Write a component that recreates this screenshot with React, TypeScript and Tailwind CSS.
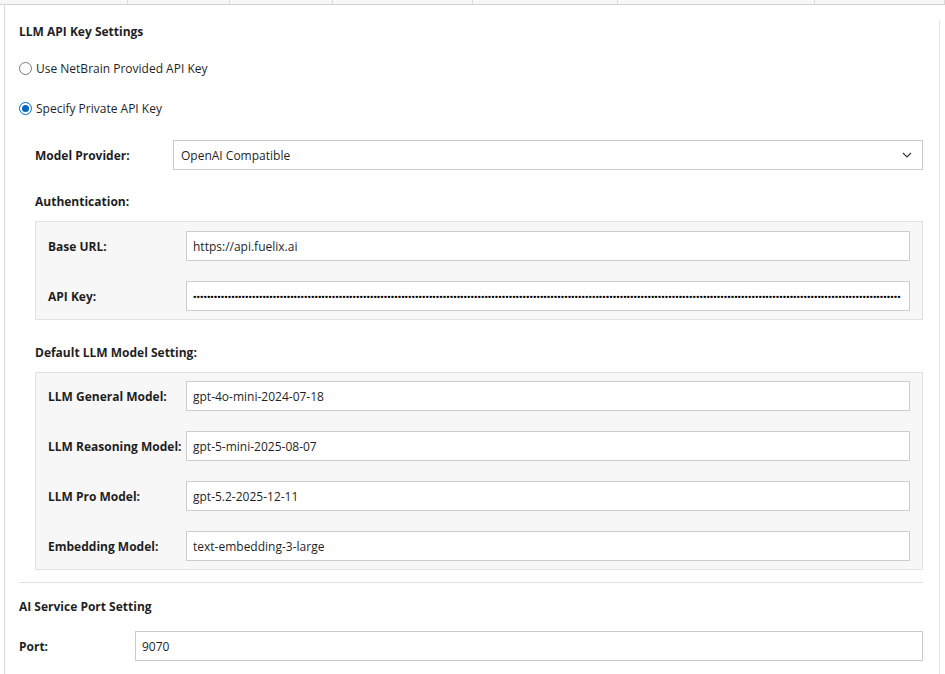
import React from 'react';

const FONT = { fontFamily: '"Open Sans", "Noto Sans", Arial, sans-serif' };

function Radio({ checked, label }: { checked?: boolean; label: string }) {
    return (
        <label className="flex items-center gap-[4px] h-[24px]">
            {checked ? (
                <span className="w-[13px] h-[13px] rounded-full border border-[#0067c0] bg-white flex items-center justify-center">
                    <span className="w-[7px] h-[7px] rounded-full bg-[#0067c0]" />
                </span>
            ) : (
                <span className="w-[13px] h-[13px] rounded-full border border-[#7a7a7a] bg-white" />
            )}
            <span className="text-[12px] text-[#1f1f1f] pt-[1px]">{label}</span>
        </label>
    );
}

function Field({ label, value, password }: { label: string; value: string; password?: boolean }) {
    return (
        <div className="flex items-center h-[30px]">
            <div className="w-[138px] shrink-0 text-[12px] font-bold text-[#1f1f1f] pt-[1px]">{label}</div>
            <div className="flex-1 min-w-0 h-[30px] border border-[#cccccc] bg-white flex items-center px-[6px]">
                {password ? (
                    <span className="whitespace-nowrap text-[12px] font-extrabold text-black -mt-[4px]">
                        {'.'.repeat(204)}
                    </span>
                ) : (
                    <span className="text-[12px] text-[#1f1f1f] whitespace-nowrap pt-[1px]">{value}</span>
                )}
            </div>
        </div>
    );
}

export default function App() {
    const tabs = [128, 102, 103, 140, 145, 197, 130];

    return (
        <div className="w-[945px] h-[674px] bg-white overflow-hidden flex flex-col" style={FONT}>
            {/* tab strip remnant */}
            <div className="h-[5px] flex bg-[#f7f7f7] border-b border-[#d4d4d4] shrink-0">
                {tabs.map((w, i) => (
                    <div key={i} className="h-full border-r border-[#dcdcdc]" style={{ width: w }} />
                ))}
            </div>

            <div className="flex flex-1 min-h-0">
                <div className="ml-[4px] border-l border-[#d9d9d9] pl-[14px] flex-1 min-w-0 pt-[14px]">
                    <div className="h-[24px] flex items-center pt-[1px] text-[12px] font-bold text-[#1f1f1f]">LLM API Key Settings</div>

                    <div className="mt-[13px]">
                        <Radio label="Use NetBrain Provided API Key" />
                    </div>
                    <div className="mt-[16px]">
                        <Radio checked label="Specify Private API Key" />
                    </div>

                    <div className="pl-[16px]">
                        <div className="mt-[20px] flex items-center h-[30px]">
                            <div className="w-[138px] shrink-0 text-[12px] font-bold text-[#1f1f1f] pt-[1px]">Model Provider:</div>
                            <div className="flex-1 h-[30px] border border-[#cccccc] bg-white flex items-center justify-between pl-[7px] pr-[10px]">
                                <span className="text-[12px] text-[#1f1f1f] pt-[1px]">OpenAI Compatible</span>
                                <svg width="10" height="6" viewBox="0 0 10 6" fill="none">
                                    <polyline points="1,1 5,5 9,1" stroke="#333" strokeWidth="1.1" />
                                </svg>
                            </div>
                        </div>

                        <div className="mt-[19px] h-[24px] flex items-center pt-[1px] text-[12px] font-bold text-[#1f1f1f]">Authentication:</div>
                        <div className="mt-[8px] bg-[#f7f7f7] border border-[#e2e2e2] pt-[9px] pb-[8px] pl-[12px] pr-[12px] flex flex-col gap-[20px]">
                            <Field label="Base URL:" value="https://api.fuelix.ai" />
                            <Field label="API Key:" value="" password />
                        </div>

                        <div className="mt-[20px] h-[24px] flex items-center pt-[1px] text-[12px] font-bold text-[#1f1f1f]">Default LLM Model Setting:</div>
                        <div className="mt-[8px] bg-[#f7f7f7] border border-[#e2e2e2] pt-[8px] pb-[8px] pl-[12px] pr-[12px] flex flex-col gap-[20px]">
                            <Field label="LLM General Model:" value="gpt-4o-mini-2024-07-18" />
                            <Field label="LLM Reasoning Model:" value="gpt-5-mini-2025-08-07" />
                            <Field label="LLM Pro Model:" value="gpt-5.2-2025-12-11" />
                            <Field label="Embedding Model:" value="text-embedding-3-large" />
                        </div>
                    </div>

                    <div className="mt-[12px] border-t border-[#e2e2e2]" />

                    <div className="mt-[11px] h-[24px] flex items-center pt-[1px] text-[12px] font-bold text-[#1f1f1f]">AI Service Port Setting</div>
                    <div className="mt-[13px] flex items-center h-[30px]">
                        <div className="w-[116px] shrink-0 text-[12px] font-bold text-[#1f1f1f] pt-[1px]">Port:</div>
                        <div className="flex-1 h-[30px] border border-[#cccccc] bg-white flex items-center px-[6px]">
                            <span className="text-[12px] text-[#1f1f1f] pt-[1px]">9070</span>
                        </div>
                    </div>
                </div>
                <div className="w-[16px] shrink-0" />
                <div className="w-[6px] shrink-0 mt-[15px] border-l border-[#e4e4e4]" />
            </div>
        </div>
    );
}
